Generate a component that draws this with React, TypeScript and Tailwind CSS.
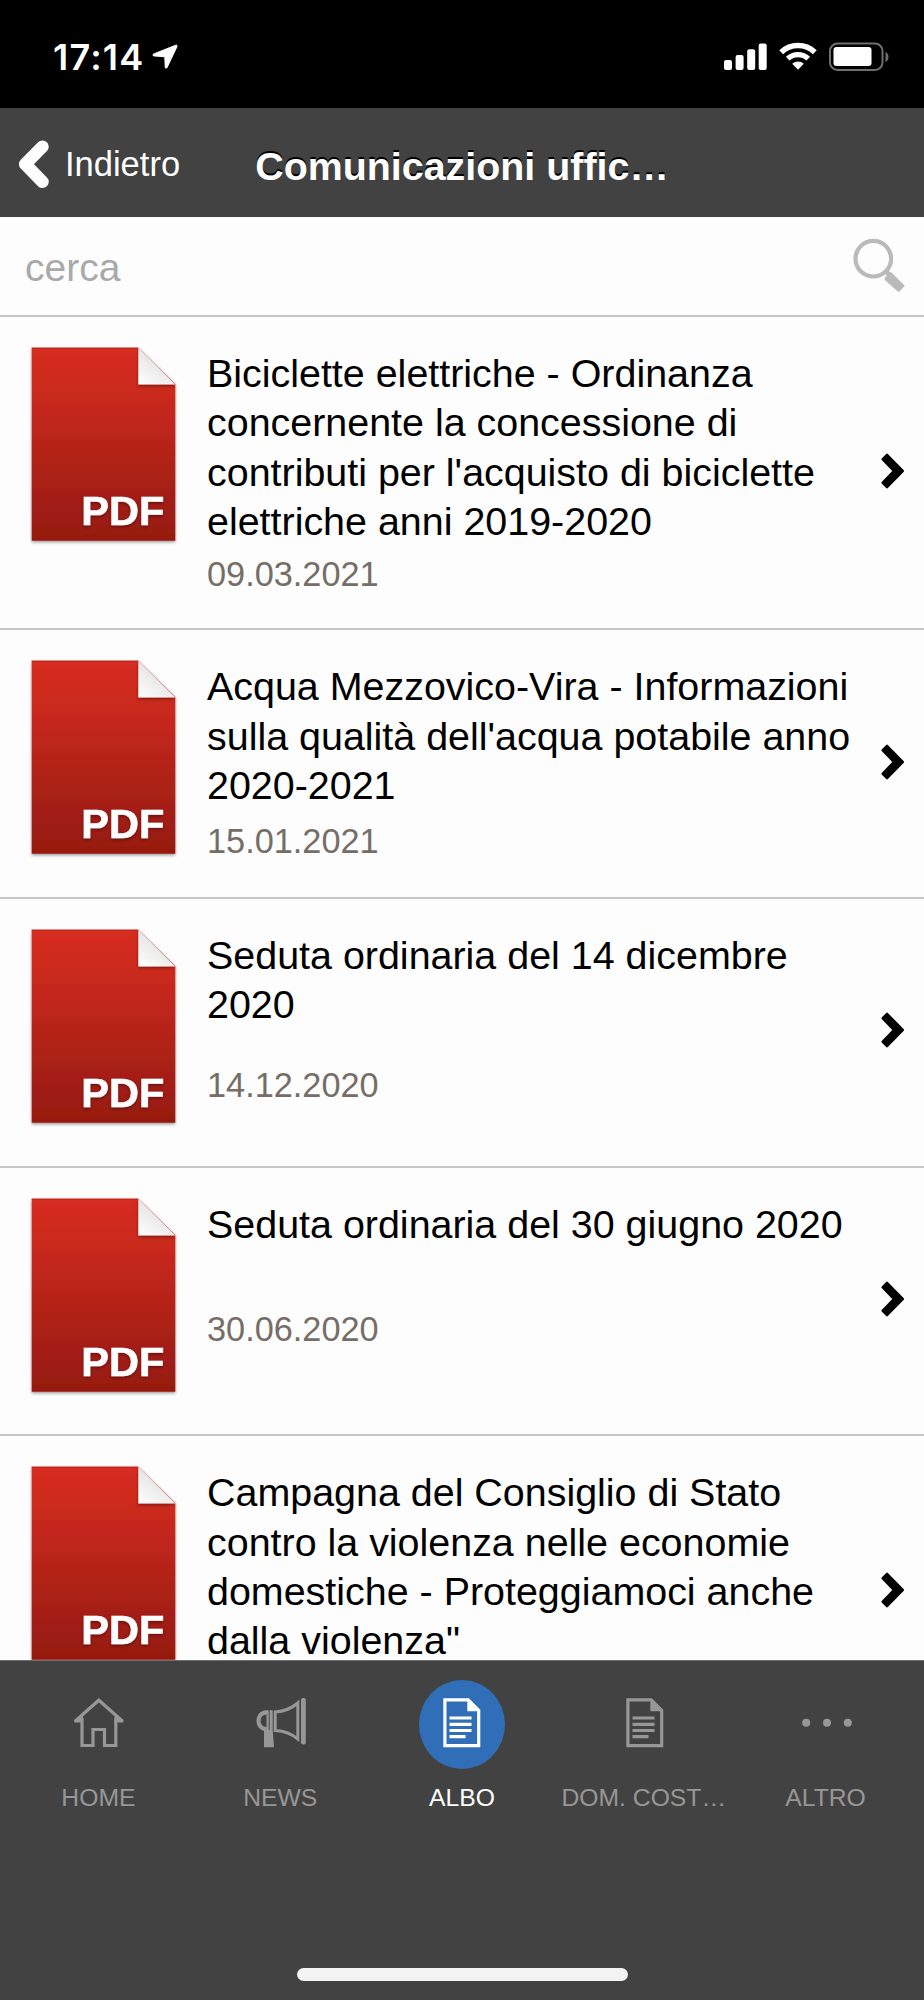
import type { ReactNode } from "react";

const documents = [
  {
    title: "Biciclette elettriche - Ordinanza concernente la concessione di contributi per l'acquisto di biciclette elettriche anni 2019-2020",
    date: "09.03.2021",
  },
  {
    title: "Acqua Mezzovico-Vira - Informazioni sulla qualità dell'acqua potabile anno 2020-2021",
    date: "15.01.2021",
  },
  { title: "Seduta ordinaria del 14 dicembre 2020", date: "14.12.2020" },
  { title: "Seduta ordinaria del 30 giugno 2020", date: "30.06.2020" },
  {
    title: "Campagna del Consiglio di Stato contro la violenza nelle economie domestiche - Proteggiamoci anche dalla violenza\"",
    date: "",
  },
];

function StatusBar() {
  return (
    <div className="flex h-[108px] shrink-0 items-start bg-black pt-[36px] pr-[34px] pl-[53px] text-white">
      <span className="font-['Inter'] text-[36px] leading-[42px] font-semibold tracking-[1.2px]">17:14</span>
      <svg className="mt-[8px] ml-[8px] h-[26px] w-[26px]" viewBox="0 0 26 26" fill="currentColor" stroke="currentColor" strokeLinejoin="round">
        <path d="M23.800 1.200 1.800 9.900C.6 10.500.6 11.800 1.900 11.900L12.800 12.800 13.200 23C13.300 24.500 14.500 24.600 15.100 23.500L25 2.500C25.300 1.500 24.700.9 23.800 1.200z" />
      </svg>
      <svg className="mt-[7px] ml-auto h-[28px] w-[43px]" viewBox="0 0 43 28" fill="currentColor">
        <rect x="0" y="17" width="8" height="10" rx="2" />
        <rect x="11.600" y="12" width="8" height="15" rx="2" />
        <rect x="23.200" y="6.300" width="8" height="20.700" rx="2" />
        <rect x="34.700" y="0.500" width="8" height="26.500" rx="2" />
      </svg>
      <svg className="mt-[6px] ml-[12px] h-[28px] w-[38px]" viewBox="0 0 38 28" fill="none" stroke="currentColor">
        <path d="M2.200 10.200a24.500 24.500 0 0 1 33.600 0" strokeWidth="5.600" />
        <path d="M8.700 16.700a15 15 0 0 1 20.600 0" strokeWidth="5.200" />
        <path d="M13.200 21.800a8.300 8.300 0 0 1 11.600 0L19 27.800z" fill="currentColor" stroke="none" />
      </svg>
      <svg className="mt-[6px] ml-[12px] h-[30px] w-[61px]" viewBox="0 0 61 30">
        <rect x="1" y="1.500" width="52.500" height="26.500" rx="7.500" fill="none" stroke="#6e6e6e" strokeWidth="2" />
        <rect x="4.500" y="5" width="38" height="19" rx="3" fill="#fff" />
        <path d="M56.500 10c4 1.500 4 8.500 0 10z" fill="#6e6e6e" />
      </svg>
    </div>
  );
}

function NavBar() {
  return (
    <header className="relative flex h-[109px] shrink-0 items-center justify-center bg-[#424242] text-white">
      <button className="absolute top-[31px] left-[18px] flex items-center">
        <svg className="h-[50px] w-[32px]" viewBox="0 0 32 50" fill="none" stroke="currentColor" strokeWidth="12.500" strokeLinecap="round" strokeLinejoin="round">
          <path d="M24.500 7.700 7.200 25.200l17.300 17.600" />
        </svg>
        <span className="ml-[15px] text-[34.500px] leading-[40px]">Indietro</span>
      </button>
      <h1 className="pt-[7px] text-[39.400px] leading-[48px] font-bold [font-variant-ligatures:none] [text-shadow:0_-2px_0_#000]">
        Comunicazioni uffic…
      </h1>
    </header>
  );
}

function SearchBar() {
  return (
    <div className="flex h-[100px] shrink-0 items-start justify-between border-b-2 border-[#c6c6c6] pt-[21px] pr-[18px] pl-[25px]">
      <span className="pt-[6px] text-[39px] leading-[48px] text-[#a9a9a9]">cerca</span>
      <svg className="h-[55px] w-[53px]" viewBox="0 0 53 55">
        <circle cx="20.300" cy="20.700" r="17.800" fill="none" stroke="#bababa" strokeWidth="4.200" />
        <path d="M32.500 33l3.500 3.500" stroke="#bababa" strokeWidth="5" />
        <path d="M31.700 39.700 38 34 51.800 47.800 45.800 54.200 31.700 42z" fill="#bababa" />
      </svg>
    </div>
  );
}

function PdfIcon() {
  return (
    <svg className="h-[200px] w-[150px] shrink-0" viewBox="0 0 150 200">
      <defs>
        <linearGradient id="sheet" x1="0" y1="0" x2="0" y2="1">
          <stop offset="0" stopColor="#d62d20" />
          <stop offset="0.250" stopColor="#c9291d" />
          <stop offset="0.750" stopColor="#a61f15" />
          <stop offset="1" stopColor="#961910" />
        </linearGradient>
        <linearGradient id="fold" x1="0.600" y1="0.300" x2="0.100" y2="1">
          <stop offset="0" stopColor="#e2e2e2" />
          <stop offset="1" stopColor="#fdfdfd" />
        </linearGradient>
        <filter id="soft" x="-20%" y="-20%" width="140%" height="150%">
          <feDropShadow dx="0" dy="1.500" stdDeviation="1.500" floodColor="#000" floodOpacity="0.400" />
        </filter>
      </defs>
      <g filter="url(#soft)">
        <path d="M2.700 2.700H109.300L146.300 39V195.700H2.700z" fill="url(#sheet)" />
      </g>
      <path d="M2.700 3.200H109.300" stroke="#b8221a" />
      <path d="M109.300 2.700V39.500H146.300z" fill="url(#fold)" filter="url(#soft)" />
      <text x="52.300" y="180" fill="#fff" stroke="#fff" strokeWidth="0.600" fontSize="41.500" fontWeight="bold" fontFamily="Liberation Sans, sans-serif" filter="url(#soft)">
        PDF
      </text>
    </svg>
  );
}

function DocumentRow({ title, date }: { title: string; date: string }) {
  return (
    <li className="flex min-h-[268.67px] border-b-2 border-[#c6c6c6] pt-[28px]">
      <div className="pl-[29px]">
        <PdfIcon />
      </div>
      <div className="ml-[28px] flex w-[655px] flex-col pt-[4px] pb-[25px]">
        <h2 className="text-[39.430px] leading-[49.330px] text-black">{title}</h2>
        <div className="flex min-h-[57px] flex-1 items-center">
          <span className="text-[34.300px] leading-[43px] text-[#756e67]">{date}</span>
        </div>
      </div>
      <svg className="mr-[19px] mb-[32px] ml-auto h-[36px] w-[24px] self-center" viewBox="0 0 24 36" stroke="#000" strokeWidth="3" strokeLinejoin="round">
        <path d="M6 2.200 21.500 18 6 33.800 2 29.800 13.300 18 2 6.200z" />
      </svg>
    </li>
  );
}

const HomeIcon = () => (
  <svg className="h-[50px] w-[50px]" viewBox="0 0 50 50" fill="none" stroke="currentColor" strokeWidth="3.200">
    <path d="M8 20V47.500H19V31.500H30.500V47.500H41.800V20" />
    <path d="M1 23.200 24.800 2.200 48.600 23.200" />
    <path d="M.3 22.300V24.500H9V15.500zM49.300 22.300V24.500H40.600V15.500z" fill="currentColor" stroke="none" />
  </svg>
);

const NewsIcon = () => (
  <svg className="h-[50px] w-[50px]" viewBox="0 0 50 50" fill="none" stroke="currentColor" strokeWidth="3">
    <path d="M12 14.300H10.500C-.2 15-.2 30.500 10.500 31.200H12" strokeWidth="4.200" />
    <path d="M10.500 12.500H12.700V33H10.500zM13.600 12.200H16.700V33H13.600zM8 32H16.700L18 49.200H8z" fill="currentColor" stroke="none" />
    <path d="M19.200 14C28 13.500 36 10 41.800 5V41C36 36 28 33 19.200 32.500z" />
    <rect x="45" y="0" width="4.800" height="46.500" rx="2" fill="currentColor" stroke="none" />
  </svg>
);

const PageIcon = () => (
  <svg className="h-[50px] w-[38px]" viewBox="0 0 38 50" fill="none" stroke="currentColor" strokeWidth="3.200">
    <path d="M1.900 1.900H25.200L35.700 12.400V47.700H1.900z" />
    <path d="M24.300 1V13.200H36.800z" fill="currentColor" stroke="none" />
    <path d="M6.500 20H28.500M6.500 26.300H28.500M6.500 32.500H28.500M6.500 38.700H22.500" />
  </svg>
);

const MoreIcon = () => (
  <svg className="h-[50px] w-[50px]" viewBox="0 0 50 50" fill="currentColor">
    <circle cx="4.200" cy="24.800" r="4" />
    <circle cx="25" cy="24.800" r="4" />
    <circle cx="45.800" cy="24.800" r="4" />
  </svg>
);

function Tab({ icon, label, active = false }: { icon: ReactNode; label: string; active?: boolean }) {
  return (
    <div className={`flex flex-1 flex-col items-center ${active ? "text-white" : "text-[#979797]"}`}>
      <div className={`flex h-[89px] w-[86px] items-center justify-center rounded-[50%] pb-[3px] ${active ? "bg-[#306fb7]" : "ml-[2px]"}`}>
        {icon}
      </div>
      <span className="mt-[14px] text-[24.700px] leading-[30px] whitespace-nowrap">{label}</span>
    </div>
  );
}

export default function App() {
  return (
    <div className="flex h-[2000px] w-[924px] flex-col overflow-hidden bg-[#fdfdfd] font-['Liberation_Sans',sans-serif]">
      <StatusBar />
      <NavBar />
      <SearchBar />

      <ul className="min-h-0 flex-1 overflow-hidden">
        {documents.map((doc) => (
          <DocumentRow key={doc.title} title={doc.title} date={doc.date} />
        ))}
      </ul>

      {/* Bottom tabs */}
      <footer className="flex h-[340px] shrink-0 flex-col items-center border-t border-[#6b6d6d] bg-[#424242] pt-[19px]">
        <nav className="flex w-[909px]">
          <Tab icon={<HomeIcon />} label="HOME" />
          <Tab icon={<NewsIcon />} label="NEWS" />
          <Tab icon={<PageIcon />} label="ALBO" active />
          <Tab icon={<PageIcon />} label="DOM. COST…" />
          <Tab icon={<MoreIcon />} label="ALTRO" />
        </nav>
        <div className="mt-auto mb-[19px] h-[13px] w-[331px] rounded-full bg-[#f3f3f3]" />
      </footer>
    </div>
  );
}
